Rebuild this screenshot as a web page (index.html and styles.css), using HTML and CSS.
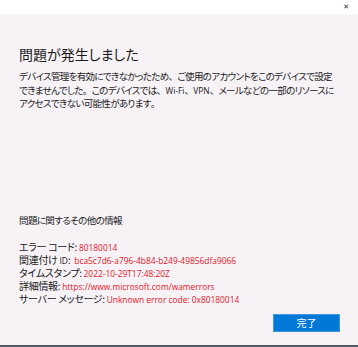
FILE: index.html
```html
<!DOCTYPE html>
<html lang="ja">
<head>
<meta charset="utf-8">
<link rel="stylesheet" href="styles.css">
</head>
<body>
<div class="window">
  <div class="topbar">
    <span class="close">✕</span>
  </div>
  <div class="content">
    <h1 class="title">問題が発生しました</h1>
    <p class="desc">デバイス管理を有効にできなかったため<span class="p">、</span>ご使用のアカウントをこのデバイスで設定<br>できませんでした<span class="p">。</span>このデバイスでは<span class="p">、</span><span class="lat">Wi-Fi</span><span class="p">、</span><span class="lat">VPN</span><span class="p">、</span>メールなどの一部のリソースに<br>アクセスできない可能性があります<span class="p">。</span></p>
    <div class="spacer"></div>
    <p class="more">問題に関するその他の情報</p>
    <ul class="details">
      <li>エラー コード: <span class="val">80180014</span></li>
      <li>関連付け <span class="lat">ID</span>:&nbsp; <span class="val">bca5c7d6-a796-4b84-b249-49856dfa9066</span></li>
      <li>タイムスタンプ: <span class="val">2022-10-29T17:48:20Z</span></li>
      <li>詳細情報: <span class="val">https://www.microsoft.com/wamerrors</span></li>
      <li>サーバー メッセージ: <span class="val">Unknown error code: 0x80180014</span></li>
    </ul>
    <div class="actions">
      <button class="done">完了</button>
    </div>
  </div>
</div>
</body>
</html>
```
FILE: styles.css
```css
html, body {
  margin: 0;
  padding: 0;
}
body {
  width: 358px;
  height: 347px;
  overflow: hidden;
  font-family: "Noto Sans CJK JP", sans-serif;
  font-feature-settings: "palt";
  color: #1a1a1a;
  background: #f6f2f6;
}
.window {
  display: flex;
  flex-direction: column;
  height: 347px;
  box-sizing: border-box;
  border-bottom: 2px solid #4d5b69;
}
.topbar {
  height: 14px;
  background: #ffffff;
  display: flex;
  justify-content: flex-end;
  align-items: center;
  padding-right: 9px;
}
.close {
  font-size: 7px;
  line-height: 1;
  color: #333;
  font-family: "DejaVu Sans", sans-serif;
}
.content {
  flex: 1;
  display: flex;
  flex-direction: column;
  padding: 30px 18px 0 19px;
  background: #f6f2f6;
}
.title {
  margin: 0;
  font-size: 14px;
  letter-spacing: 0;
  font-weight: normal;
  line-height: 20px;
}
.desc {
  margin: 6px 0 0;
  font-size: 9.5px;
  letter-spacing: -0.65px;
  line-height: 13.5px;
  white-space: nowrap;
}
.p {
  font-feature-settings: normal;
}
.lat {
  font-family: "Open Sans", "Noto Sans", sans-serif;
  font-size: 8.4px;
  letter-spacing: 0;
}
.spacer {
  height: 102px;
}
.more {
  margin: 0;
  font-size: 9.5px;
  letter-spacing: -0.6px;
  line-height: 14px;
}
.details {
  list-style: none;
  margin: 14px 0 0;
  padding: 0;
  font-size: 10px;
  letter-spacing: -0.3px;
  line-height: 12px;
  white-space: nowrap;
}
.val {
  font-family: "Open Sans", "Noto Sans", sans-serif;
  font-size: 8.4px;
  letter-spacing: 0;
  color: #e4161f;
}
.actions {
  display: flex;
  justify-content: flex-end;
  margin-top: 8px;
}
.done {
  width: 67px;
  height: 18px;
  border: 1px solid #3f95e0;
  background: #0078d7;
  color: #fff;
  font-family: inherit;
  font-size: 10px;
  padding: 0;
}
```
